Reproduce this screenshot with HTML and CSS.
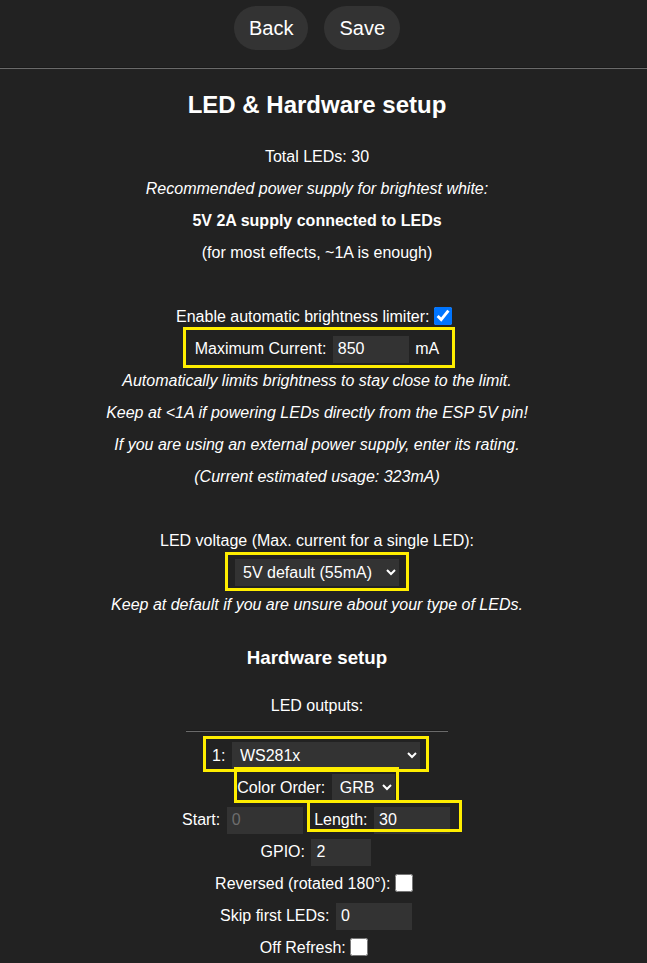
FILE: index.html
```html
<!DOCTYPE html>
<html lang="en">
<head>
<meta charset="utf-8">
<title>LED Settings</title>
<link rel="stylesheet" href="styles.css">
</head>
<body>
<div class="toprow">
  <button class="btn" type="button">Back</button>
  <button class="btn" type="button">Save</button>
</div>
<hr class="rule">
<main class="page">
<h2 class="title">LED &amp; Hardware setup</h2>
<div class="block">
  Total LEDs: 30<br>
  <i>Recommended power supply for brightest white:</i><br>
  <b>5V 2A supply connected to LEDs</b><br>
  (for most effects, ~1A is enough)<br>
  <br>
  Enable automatic brightness limiter: <input class="chk" type="checkbox" checked><br>
  <span class="mark mark-ma">Maximum Current: <input class="field" type="text" value="850"> mA</span><br>
  <i>Automatically limits brightness to stay close to the limit.</i><br>
  <i>Keep at &lt;1A if powering LEDs directly from the ESP 5V pin!</i><br>
  <i>If you are using an external power supply, enter its rating.</i><br>
  <i>(Current estimated usage: 323mA)</i><br>
  <br>
  LED voltage (Max. current for a single LED):<br>
  <span class="mark mark-volt"><select class="sel sel-volt"><option>5V default (55mA)</option></select></span><br>
  <i>Keep at default if you are unsure about your type of LEDs.</i>
</div>
<h3 class="sub">Hardware setup</h3>
<div class="block">
  LED outputs:
  <hr class="rule-sml">
  <span class="mark mark-type">1: <select class="sel sel-type"><option>WS281x</option></select></span><br>
  <span class="mark mark-order">Color Order: <select class="sel sel-order"><option>GRB</option></select></span><br>
  Start: <input class="field" type="text" value="0" disabled> <span class="mark mark-len">Length: <input class="field" type="text" value="30"></span><br>
  GPIO: <input class="field field-gpio" type="text" value="2"><br>
  Reversed (rotated 180°): <input class="chk" type="checkbox"><br>
  Skip first LEDs: <input class="field" type="text" value="0"><br>
  Off Refresh: <input class="chk" type="checkbox"><br>
</div>
</main>
</body>
</html>
```
FILE: styles.css
```css
html {
  background: #222;
}
body {
  margin: 0;
  background: #222;
  color: #fff;
  font-family: "Liberation Sans", Arial, sans-serif;
  font-size: 16px;
  line-height: 32px;
  text-align: center;
}
.toprow {
  display: flex;
  justify-content: center;
  gap: 16px;
  padding: 6px 13px 0 0;
}
.page {
  display: block;
  padding-right: 13px;
}
.btn {
  height: 44px;
  padding: 0 15px;
  border: 0;
  border-radius: 22px;
  background: #333;
  color: #fff;
  font-family: "Liberation Sans", Arial, sans-serif;
  font-size: 20px;
  line-height: 44px;
}
.rule {
  margin: 17px 0 0;
  border: 0;
  border-top: 1px solid #1b1b1b;
  border-bottom: 1px solid #6a6a6a;
  height: 0;
}
.title {
  margin: 12px 0 12px;
  font-size: 24px;
  line-height: 48px;
  font-weight: bold;
}
.sub {
  margin: 18px 0 14px;
  font-size: 18.72px;
  line-height: 37.44px;
  font-weight: bold;
}
.rule-sml {
  width: 262px;
  margin: 8px auto;
  border: 0;
  border-top: 1px solid #1b1b1b;
  border-bottom: 1px solid #6a6a6a;
  height: 0;
}
.field {
  box-sizing: border-box;
  width: 76px;
  height: 27px;
  margin: 0 2px;
  padding: 0 5px;
  border: 0;
  background: #333;
  color: #fff;
  font-family: "Liberation Sans", Arial, sans-serif;
  font-size: 16px;
}
.field:disabled {
  color: #6d6d6d;
}
.field-gpio {
  width: 60px;
}
.sel {
  box-sizing: border-box;
  height: 27px;
  margin: 0 2px;
  padding: 0 0 0 4px;
  border: 0;
  border-radius: 0;
  background: #333;
  color: #fff;
  font-family: "Liberation Sans", Arial, sans-serif;
  font-size: 16px;
}
.sel-volt {
  width: 164px;
}
.sel-type {
  width: 188px;
}
.sel-order {
  width: 63px;
}
.chk {
  width: 18px;
  height: 18px;
  margin: 6px 6px 0 0;
  vertical-align: top;
}
.mark {
  display: inline-block;
  position: relative;
}
.mark::after {
  content: "";
  position: absolute;
  border: 3px solid #ffee00;
  pointer-events: none;
}
.mark-ma::after {
  top: -6px;
  right: -16px;
  bottom: -3px;
  left: -12px;
}
.mark-volt::after {
  top: -5px;
  right: -8px;
  bottom: -2px;
  left: -8px;
}
.mark-type::after {
  top: -4px;
  right: -7px;
  bottom: 0;
  left: -9px;
}
.mark-order::after {
  top: -5px;
  right: -2px;
  bottom: 1px;
  left: -3px;
}
.mark-len {
  margin-left: 5px;
}
.mark-len::after {
  top: -4px;
  right: -10px;
  bottom: 4px;
  left: -7px;
}
```
